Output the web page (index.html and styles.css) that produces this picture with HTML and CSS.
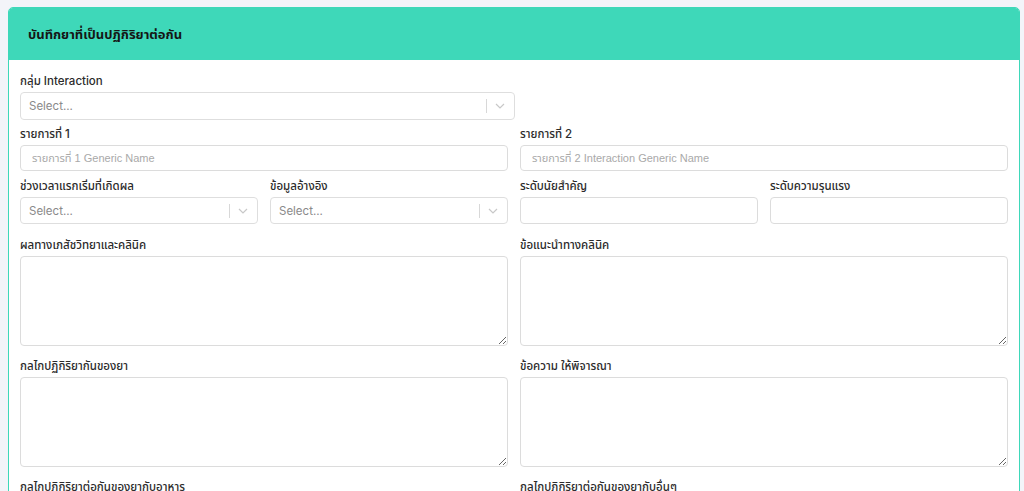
FILE: index.html
```html
<!DOCTYPE html>
<html lang="th">

<head>
    <meta charset="UTF-8">
    <meta name="viewport" content="width=device-width, initial-scale=1.0">
    <title>บันทึกยาที่เป็นปฏิกิริยาต่อกัน</title>
    <link rel="stylesheet" href="styles.css">
</head>

<body>
    <div class="card">
        <div class="card-header">บันทึกยาที่เป็นปฏิกิริยาต่อกัน</div>
        <div class="card-body">
            <div class="group group-half">
                <label class="label">กลุ่ม Interaction</label>
                <div class="select">
                    <span class="select-text">Select...</span>
                    <span class="select-sep"></span>
                    <svg class="select-arrow" width="10" height="6" viewBox="0 0 10 6"><path d="M1 1l4 4 4-4" fill="none" stroke="#c8c8c8" stroke-width="1.2"/></svg>
                </div>
            </div>

            <div class="row two row-inputs">
                <div class="group">
                    <label class="label">รายการที่ 1</label>
                    <input class="input" type="text" placeholder="รายการที่ 1 Generic Name">
                </div>
                <div class="group">
                    <label class="label">รายการที่ 2</label>
                    <input class="input" type="text" placeholder="รายการที่ 2 Interaction Generic Name">
                </div>
            </div>

            <div class="row four">
                <div class="group">
                    <label class="label">ช่วงเวลาแรกเริ่มที่เกิดผล</label>
                    <div class="select">
                        <span class="select-text">Select...</span>
                        <span class="select-sep"></span>
                        <svg class="select-arrow" width="10" height="6" viewBox="0 0 10 6"><path d="M1 1l4 4 4-4" fill="none" stroke="#c8c8c8" stroke-width="1.2"/></svg>
                    </div>
                </div>
                <div class="group">
                    <label class="label">ข้อมูลอ้างอิง</label>
                    <div class="select">
                        <span class="select-text">Select...</span>
                        <span class="select-sep"></span>
                        <svg class="select-arrow" width="10" height="6" viewBox="0 0 10 6"><path d="M1 1l4 4 4-4" fill="none" stroke="#c8c8c8" stroke-width="1.2"/></svg>
                    </div>
                </div>
                <div class="group">
                    <label class="label">ระดับนัยสำคัญ</label>
                    <input class="input" type="text">
                </div>
                <div class="group">
                    <label class="label">ระดับความรุนแรง</label>
                    <input class="input" type="text">
                </div>
            </div>

            <div class="row two row-text">
                <div class="group">
                    <label class="label">ผลทางเภสัชวิทยาและคลินิค</label>
                    <textarea class="textarea"></textarea>
                </div>
                <div class="group">
                    <label class="label">ข้อแนะนำทางคลินิค</label>
                    <textarea class="textarea"></textarea>
                </div>
            </div>

            <div class="row two row-text">
                <div class="group">
                    <label class="label">กลไกปฏิกิริยากันของยา</label>
                    <textarea class="textarea"></textarea>
                </div>
                <div class="group">
                    <label class="label">ข้อความ ให้พิจารณา</label>
                    <textarea class="textarea"></textarea>
                </div>
            </div>

            <div class="row two row-text">
                <div class="group">
                    <label class="label">กลไกปฏิกิริยาต่อกันของยากับอาหาร</label>
                    <textarea class="textarea"></textarea>
                </div>
                <div class="group">
                    <label class="label">กลไกปฏิกิริยาต่อกันของยากับอื่นๆ</label>
                    <textarea class="textarea"></textarea>
                </div>
            </div>
        </div>
    </div>
</body>

</html>
```

FILE: styles.css
```css
html {
    height: 100%;
}

body {
    margin: 0;
    padding: 7px 4px 0 8px;
    background-color: #f3f4f9;
    font-family: Inter, "Noto Sans", "Noto Sans Thai", sans-serif;
    color: #2b2b2b;
}

.card {
    background-color: #fff;
    border: 1px solid #3ed8b9;
    border-radius: 5px 5px 0 0;
    overflow: hidden;
}

.card-header {
    background-color: #3ed8b9;
    height: 52px;
    line-height: 52px;
    padding: 0 19px;
    font-size: 13px;
    font-weight: 700;
    color: #151515;
}

.card-body {
    padding: 13px 11px 0 11px;
}

.row {
    display: grid;
    column-gap: 12px;
}

.row.two {
    grid-template-columns: 1fr 1fr;
}

.row.four {
    grid-template-columns: 1fr 1fr 1fr 1fr;
    margin-bottom: 7px;
}

.group {
    margin-bottom: 6px;
}

.row-inputs .group {
    margin-bottom: 7px;
}

.row-text .group {
    margin-bottom: 12px;
}

.group-half {
    width: 495px;
}

.label {
    display: block;
    font-size: 11.5px;
    font-weight: 500;
    line-height: 17px;
    margin-bottom: 2px;
    color: #2b2b2b;
}

.select {
    box-sizing: border-box;
    height: 28px;
    border: 1px solid #dedede;
    border-radius: 4px;
    display: flex;
    align-items: center;
    padding-left: 8px;
}

.select-text {
    flex: 1;
    font-size: 11.5px;
    color: #8a8a8a;
}

.select-sep {
    width: 1px;
    height: 14px;
    background-color: #d8d8d8;
}

.select-arrow {
    margin: 0 9px 0 8px;
}

.input {
    box-sizing: border-box;
    display: block;
    width: 100%;
    height: 26px;
    border: 1px solid #dcdcdc;
    border-radius: 4px;
    padding: 0 11px;
    font-family: "Liberation Sans", Arial, "Noto Sans Thai", sans-serif;
    font-size: 11px;
    outline: none;
}

.row.four .input,
.row.four .select {
    height: 27px;
}

.input::placeholder {
    color: #a9a9a9;
}

.textarea {
    box-sizing: border-box;
    display: block;
    width: 100%;
    height: 90px;
    border: 1px solid #dcdcdc;
    border-radius: 4px;
    margin: 0;
}
```
